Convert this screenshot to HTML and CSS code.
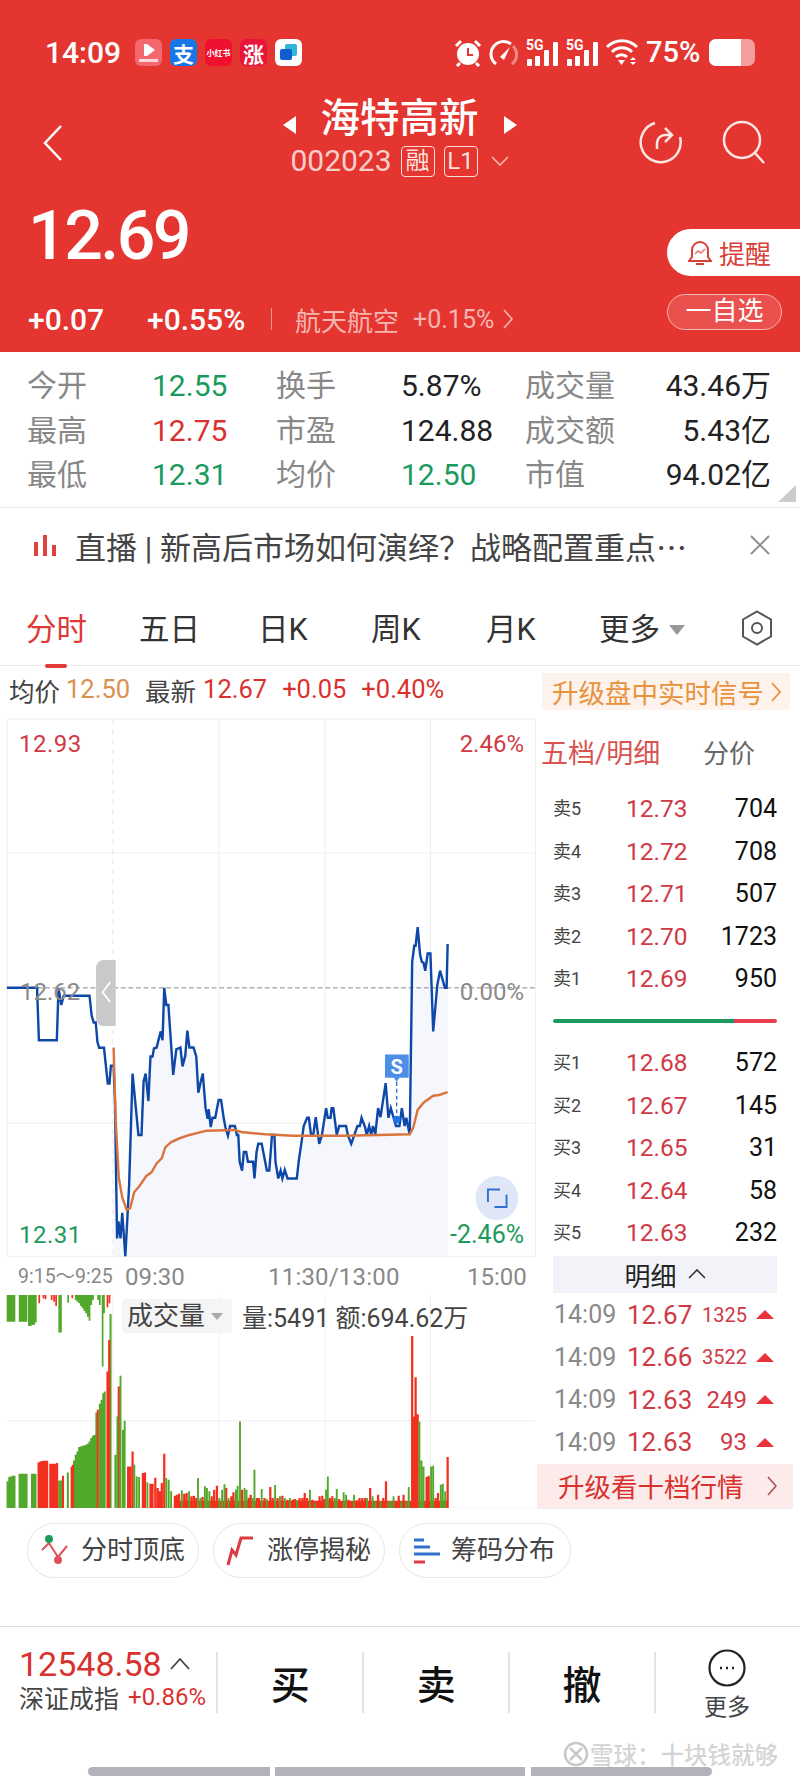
FILE: index.html
```html
<!DOCTYPE html>
<html lang="zh">
<head>
<meta charset="utf-8">
<title>海特高新</title>
<link rel="stylesheet" href="styles.css">
</head>
<body>
<div class="page">
<header class="header">
  <div class="status">
    <span class="clock">14:09</span>
    <div class="apps">
      <span class="app app-video"><svg viewBox="0 0 27 27" width="27" height="27"><path d="M9 5h3l8 6-8 6H9z" fill="#fff"/><rect x="4" y="20" width="19" height="3" fill="#ffd9d9"/></svg></span>
      <span class="app app-ali">支</span>
      <span class="app app-red">小红书</span>
      <span class="app app-zhang">涨</span>
      <span class="app app-chat"><svg viewBox="0 0 27 27" width="27" height="27"><rect x="10" y="5" width="12" height="12" rx="2" fill="#2fb6d8"/><rect x="5" y="10" width="12" height="11" rx="2" fill="#0d5fd0"/></svg></span>
    </div>
    <div class="sys">
      <svg class="i-alarm" viewBox="0 0 28 28" width="28" height="28"><circle cx="14" cy="15" r="11" fill="#fff"/><path d="M14 9v7h5" fill="none" stroke="#e53530" stroke-width="2"/><path d="M2 7l5-5M26 7l-5-5M6 24l-3 3M22 24l3 3" stroke="#fff" stroke-width="3" fill="none"/></svg>
      <svg class="i-gauge" viewBox="0 0 30 28" width="30" height="28"><path d="M8 25A12 12 0 0 1 23 5" fill="none" stroke="#fff" stroke-width="3"/><path d="M25 7A12 12 0 0 1 24 25" fill="none" stroke="#f08a84" stroke-width="3"/><path d="M12 18L22 8l-6 13z" fill="#fff"/></svg>
      <span class="signal"><b>5G</b><i class="b1"></i><i class="b2"></i><i class="b3"></i><i class="b4"></i></span>
      <span class="signal"><b>5G</b><i class="b1"></i><i class="b2"></i><i class="b3"></i><i class="b4"></i></span>
      <svg class="i-wifi" viewBox="0 0 32 27" width="32" height="27"><path d="M1 8a21 21 0 0 1 30 0M6 13a14 14 0 0 1 20 0M10 18a8 8 0 0 1 11 0" fill="none" stroke="#fff" stroke-width="3"/><path d="M12 21h7l-3.500 5zM24 21l3-3 3 3zM24 23h6l-3 3z" fill="#fff"/></svg>
      <span class="batt-text">75%</span>
      <span class="battery"><i></i></span>
    </div>
  </div>
  <div class="nav">
    <svg class="back" viewBox="0 0 20 36" width="20" height="36"><path d="M18 1L2 18l16 17" fill="none" stroke="#fff" stroke-width="2.500"/></svg>
    <div class="stock">
      <div class="stock-name"><i class="tri-l"></i><span>海特高新</span><i class="tri-r"></i></div>
      <div class="stock-code"><span>002023</span><em class="tag">融</em><em class="tag">L1</em>
        <svg viewBox="0 0 18 10" width="18" height="10"><path d="M1 1l8 8 8-8" fill="none" stroke="#f4b9b5" stroke-width="1.600"/></svg></div>
    </div>
    <div class="nav-actions">
      <svg viewBox="0 0 44 44" width="44" height="44"><path d="M16 3A20 20 0 1 0 41 17" fill="none" stroke="#fde6e4" stroke-width="2.500"/><path d="M18 29v-6a8 8 0 0 1 8-8h6M26 8l7 7-7 7" fill="none" stroke="#fde6e4" stroke-width="2.500"/></svg>
      <svg viewBox="0 0 44 44" width="44" height="44"><circle cx="20" cy="20" r="18" fill="none" stroke="#fde6e4" stroke-width="2.500"/><path d="M33 33l9 10" stroke="#fde6e4" stroke-width="2.500"/></svg>
    </div>
  </div>
  <div class="quote">
    <div class="quote-left">
      <div class="price">12.69</div>
      <div class="change"><span class="c1">+0.07</span><span class="c2">+0.55%</span><i class="vsep"></i><span class="c3">航天航空</span><span class="c4">+0.15%</span>
        <svg viewBox="0 0 10 20" width="10" height="20"><path d="M1 1l8 9-8 9" fill="none" stroke="#f5b5b0" stroke-width="1.600"/></svg></div>
    </div>
    <div class="quote-right">
      <div class="alert"><svg viewBox="0 0 24 26" width="24" height="26"><path d="M12 2a8 8 0 0 0-8 8v7l-3 4h22l-3-4v-7a8 8 0 0 0-8-8zM8 24h8" fill="none" stroke="#d9403a" stroke-width="2"/><path d="M7 14l3-3 3 2 4-4" fill="none" stroke="#e57a75" stroke-width="1.600"/></svg><span>提醒</span></div>
      <div class="watch">一自选</div>
    </div>
  </div>
</header>

<section class="stats">
  <div class="stat-row"><span class="k">今开</span><span class="v green">12.55</span><span class="k">换手</span><span class="v">5.87%</span><span class="k">成交量</span><span class="v end">43.46万</span></div>
  <div class="stat-row"><span class="k">最高</span><span class="v red">12.75</span><span class="k">市盈</span><span class="v">124.88</span><span class="k">成交额</span><span class="v end">5.43亿</span></div>
  <div class="stat-row"><span class="k">最低</span><span class="v green">12.31</span><span class="k">均价</span><span class="v green">12.50</span><span class="k">市值</span><span class="v end">94.02亿</span></div>
  <i class="fold"></i>
</section>

<section class="banner">
  <svg viewBox="0 0 24 24" width="24" height="24"><path d="M3 9v14M12 2v21M21 12v11" stroke="#e2403f" stroke-width="4" fill="none"/></svg>
  <span class="banner-text">直播 | 新高后市场如何演绎？战略配置重点⋯</span>
  <svg class="close" viewBox="0 0 20 20" width="20" height="20"><path d="M1 1l18 18M19 1L1 19" stroke="#8a8a8a" stroke-width="1.800"/></svg>
</section>

<nav class="tabs">
  <span class="tab tab-on">分时</span><span class="tab t2">五日</span><span class="tab t3">日K</span><span class="tab t4">周K</span><span class="tab t5">月K</span><span class="tab t6">更多<i class="tab-tri"></i></span>
  <svg class="hex" viewBox="0 0 32 36" width="32" height="36"><path d="M16 1.500L30 9.500v17L16 34.500 2 26.500v-17z" fill="none" stroke="#555" stroke-width="2"/><circle cx="16" cy="18" r="5" fill="none" stroke="#555" stroke-width="2"/></svg>
</nav>

<section class="infobar">
  <span class="ib-k">均价</span><span class="ib-o">12.50</span><span class="ib-k ib-gap">最新</span><span class="ib-r">12.67</span><span class="ib-r ib-gap2">+0.05</span><span class="ib-r ib-gap2">+0.40%</span>
  <div class="signal-btn"><span>升级盘中实时信号</span><svg viewBox="0 0 10 20" width="10" height="20"><path d="M1 1l8 9-8 9" fill="none" stroke="#e8923b" stroke-width="1.800"/></svg></div>
</section>

<main class="main">
  <div class="left">
    <div class="plot">
      <svg class="plot-svg" viewBox="0 22 1559.5 1510" preserveAspectRatio="none">
        <g class="grid">
          <path d="M21 25H1555V1530H21zM21 400H1555M21 1157H1555M636 25V1530M944 25V1530M1250 25V1530"/>
        </g>
        <path class="grid-dash" d="M328 25V1530"/>
        <polygon class="area" points="330,1530 334,1100 340,1480 344,1432 350,1480 355,1408 364,1530 375,1330 385,1018 395,1120 402,1190 411,1190 417,1040 423,1018 431,1095 437,970 443,970 447,948 455,945 460,925 467,900 472,925 477,778 483,826 489,826 503,1022 512,950 524,945 530,998 538,968 544,898 550,945 562,945 570,970 576,1072 582,1045 589,1018 597,1115 603,1145 606,1118 612,1168 617,1142 625,1142 635,1092 642,1092 650,1145 655,1170 662,1192 668,1165 682,1165 688,1190 692,1190 696,1265 703,1290 708,1238 715,1238 720,1265 735,1265 739,1312 745,1238 750,1215 760,1215 775,1290 782,1290 790,1190 797,1190 800,1265 808,1312 815,1290 820,1312 827,1288 835,1312 862,1312 868,1260 875,1215 882,1165 892,1142 897,1142 903,1188 910,1188 917,1140 927,1215 935,1190 947,1115 952,1142 960,1142 963,1115 968,1115 978,1190 985,1165 1005,1165 1010,1190 1020,1215 1038,1165 1045,1165 1050,1142 1060,1168 1065,1190 1072,1165 1078,1190 1083,1165 1090,1188 1098,1115 1105,1140 1120,1045 1128,1142 1135,1115 1150,1165 1160,1165 1167,1115 1175,1165 1180,1142 1190,1190 1197,705 1203,660 1207,660 1213,608 1220,685 1225,705 1230,708 1235,730 1242,682 1250,682 1258,900 1270,770 1278,730 1292,778 1297,778 1300,655 1300,1530"/>
        <path class="mid-dash" d="M21 778H1555"/>
        <polyline class="price-line" points="20,778 108,778 108,790 113,925 165,925 170,778 178,826 185,800 260,800 266,855 272,875 278,875 283,930 288,946 302,946 313,1046 318,1046 322,996 330,996 334,1100 340,1480 344,1432 350,1480 355,1408 364,1530 375,1330 385,1018 395,1120 402,1190 411,1190 417,1040 423,1018 431,1095 437,970 443,970 447,948 455,945 460,925 467,900 472,925 477,778 483,826 489,826 503,1022 512,950 524,945 530,998 538,968 544,898 550,945 562,945 570,970 576,1072 582,1045 589,1018 597,1115 603,1145 606,1118 612,1168 617,1142 625,1142 635,1092 642,1092 650,1145 655,1170 662,1192 668,1165 682,1165 688,1190 692,1190 696,1265 703,1290 708,1238 715,1238 720,1265 735,1265 739,1312 745,1238 750,1215 760,1215 775,1290 782,1290 790,1190 797,1190 800,1265 808,1312 815,1290 820,1312 827,1288 835,1312 862,1312 868,1260 875,1215 882,1165 892,1142 897,1142 903,1188 910,1188 917,1140 927,1215 935,1190 947,1115 952,1142 960,1142 963,1115 968,1115 978,1190 985,1165 1005,1165 1010,1190 1020,1215 1038,1165 1045,1165 1050,1142 1060,1168 1065,1190 1072,1165 1078,1190 1083,1165 1090,1188 1098,1115 1105,1140 1120,1045 1128,1142 1135,1115 1150,1165 1160,1165 1167,1115 1175,1165 1180,1142 1190,1190 1197,705 1203,660 1207,660 1213,608 1220,685 1225,705 1230,708 1235,730 1242,682 1250,682 1258,900 1270,770 1278,730 1292,778 1297,778 1300,655"/>
        <polyline class="avg-line" points="330,945 336,1150 345,1310 355,1365 368,1400 378,1395 390,1350 405,1333 425,1305 440,1295 455,1270 470,1255 480,1225 497,1210 520,1200 550,1190 600,1178 680,1176 700,1182 770,1188 850,1192 1000,1192 1100,1190 1190,1188 1200,1170 1213,1120 1230,1100 1258,1080 1275,1078 1300,1070"/>
        <path class="handle" d="M336 700H300a21 21 0 0 0-21 21V864a21 21 0 0 0 21 21H336z"/>
        <path class="handle-chev" d="M320 762L298 790 320 818"/>
        <path class="s-stem" d="M1152 1042V1150"/>
        <circle class="s-dot" cx="1152" cy="1147" r="11"/>
        <path class="s-flag" d="M1118 965H1187V1030H1160L1152 1042 1144 1030H1118z"/>
        <text class="s-text" x="1152" y="1018">S</text>
        <circle class="expand" cx="1443" cy="1367" r="62"/>
        <path class="expand-ic" d="M1417 1378V1343H1452M1471 1357V1392H1436"/>
      </svg>
      <span class="lbl l-tl">12.93</span>
      <span class="lbl l-tr">2.46%</span>
      <span class="lbl l-ml">12.62</span>
      <span class="lbl l-mr">0.00%</span>
      <span class="lbl l-bl">12.31</span>
      <span class="lbl l-br">-2.46%</span>
    </div>
    <div class="axis"><span class="ax0">9:15～9:25</span><span class="ax1">09:30</span><span class="ax2">11:30/13:00</span><span class="ax3">15:00</span></div>
    <div class="vol">
      <svg class="plot-svg" viewBox="0 135 1559.5 640" preserveAspectRatio="none">
        <path class="grid" d="M21 775H1555M21 513H1555M328 135V775M636 135V775M944 135V775M1250 135V775"/>
        <path class="vr" stroke-width="22" d="M505 764H1300"/>
        <path class="vg" stroke-width="5" d="M22 135V215M27 135V215M32 135V215M37 135V215M42 135V215M57 135V215M62 135V215M67 135V215M72 135V215M77 135V215M84 135V228M89 135V228M94 135V225M99 135V225M104 135V218M172 135V248M177 135V248M198 135V158M220 135V150M225 135V155M230 135V160M235 135V168M240 135V175M245 135V182M250 135V190M255 135V200M260 135V212M265 135V165M270 135V150M285 135V150M290 135V165M298 135V350M302 135V190"/>
        <path class="vr" stroke-width="5" d="M114 135V160M126 135V145M132 135V148M150 135V150M157 135V155M163 135V168M210 135V145M312 135V172M318 135V160"/>
        <path class="vg" stroke-width="6" d="M22 775V695M27 775V682M32 775V680M37 775V678M42 775V678M57 775V672M62 775V672M67 775V672M72 775V672M77 775V672M93 775V672M98 775V672M103 775V672M172 775V692M177 775V692M197 775V668M215 775V632M220 775V615M225 775V605M230 775V592M235 775V590M240 775V588M245 775V587M250 775V585M255 775V582M260 775V575M265 775V565M270 775V558M275 775V555M280 775V488M290 775V462M295 775V450M300 775V430M304 775V425M321 775V192"/>
        <path class="vr" stroke-width="6" d="M112 775V638M117 775V635M122 775V634M127 775V633M132 775V633M137 775V633M146 775V642M151 775V642M156 775V642M161 775V642M166 775V640M183 775V678M208 775V650M212 775V645M284 775V480M312 775V365M317 775V270"/>
        <path class="vr" stroke-width="6.500" d="M345 775V410M372 775V650M378 775V650M385 775V605M415 775V670M421 775V668M437 775V702M443 775V702M451 775V684M458 775V715M464 775V725M470 775V700M477 775V612M508 775V738M514 775V735M520 775V732M535 775V732M542 775V730M556 775V740M563 775V738M570 775V745M588 775V742M615 775V740M622 775V720M630 775V708M657 775V715M672 775V740M678 775V728M703 775V720M722 775V745M728 775V735M746 775V745M752 775V745M768 775V745M785 775V712M792 775V745M806 775V745M820 775V738M835 775V750M850 775V750M856 775V748M870 775V745M878 775V745M885 775V730M892 775V745M907 775V750M928 775V740M936 775V738M943 775V748M958 775V745M965 775V740M985 775V748M1012 775V750M1018 775V755M1036 775V752M1044 775V745M1052 775V745M1060 775V745M1075 775V715M1098 775V735M1113 775V745M1121 775V695M1150 775V755M1158 775V738M1172 775V735M1197 775V258M1202 775V500M1207 775V382M1213 775V493M1239 775V682M1245 775V678M1265 775V745M1272 775V730M1300 775V622"/>
        <path class="vg" stroke-width="5.500" d="M335 775V615M341 775V500M350 775V378M357 775V540M362 775V513M390 775V645M397 775V680M404 775V682M428 775V698M483 775V685M490 775V690M497 775V725M528 775V722M549 775V725M575 775V685M582 775V745M595 775V710M601 775V715M608 775V725M637 775V745M645 775V720M652 775V704M664 775V745M685 775V720M690 775V708M697 775V515M710 775V715M716 775V720M733 775V745M739 775V660M760 775V718M775 775V748M799 775V706M813 775V740M827 775V745M842 775V745M863 775V750M900 775V720M914 775V760M947 775V720M952 775V680M972 775V745M978 775V718M998 775V728M1005 775V735M1028 775V735M1066 775V745M1082 775V740M1090 775V755M1105 775V755M1128 775V755M1135 775V755M1143 775V740M1165 775V755M1180 775V755M1187 775V712M1218 775V515M1224 775V632M1230 775V650M1252 775V650M1258 775V648M1280 775V705M1286 775V702M1293 775V725"/>
      </svg>
      <div class="vol-head">
        <span class="vol-chip">成交量<i></i></span>
        <span class="vol-info">量:5491 额:694.62万</span>
      </div>
    </div>
  </div>

  <aside class="right">
    <div class="book-head"><span class="bh1">五档/明细</span><span class="bh2">分价</span></div>
    <div class="book-row"><span class="bk">卖5</span><span class="bp">12.73</span><span class="bq">704</span></div>
    <div class="book-row"><span class="bk">卖4</span><span class="bp">12.72</span><span class="bq">708</span></div>
    <div class="book-row"><span class="bk">卖3</span><span class="bp">12.71</span><span class="bq">507</span></div>
    <div class="book-row"><span class="bk">卖2</span><span class="bp">12.70</span><span class="bq">1723</span></div>
    <div class="book-row"><span class="bk">卖1</span><span class="bp">12.69</span><span class="bq">950</span></div>
    <div class="book-bar"><i></i></div>
    <div class="book-row"><span class="bk">买1</span><span class="bp">12.68</span><span class="bq">572</span></div>
    <div class="book-row"><span class="bk">买2</span><span class="bp">12.67</span><span class="bq">145</span></div>
    <div class="book-row"><span class="bk">买3</span><span class="bp">12.65</span><span class="bq">31</span></div>
    <div class="book-row"><span class="bk">买4</span><span class="bp">12.64</span><span class="bq">58</span></div>
    <div class="book-row"><span class="bk">买5</span><span class="bp">12.63</span><span class="bq">232</span></div>
    <div class="detail-band"><span>明细</span><svg viewBox="0 0 18 10" width="18" height="10"><path d="M1 9l8-8 8 8" fill="none" stroke="#333" stroke-width="1.600"/></svg></div>
    <div class="trade"><span class="tt">14:09</span><span class="tp">12.67</span><span class="tq small">1325</span><i class="up"></i></div>
    <div class="trade"><span class="tt">14:09</span><span class="tp">12.66</span><span class="tq small">3522</span><i class="up"></i></div>
    <div class="trade"><span class="tt">14:09</span><span class="tp">12.63</span><span class="tq">249</span><i class="up"></i></div>
    <div class="trade"><span class="tt">14:09</span><span class="tp">12.63</span><span class="tq">93</span><i class="up"></i></div>
    <div class="upgrade"><span>升级看十档行情</span><svg viewBox="0 0 10 20" width="10" height="20"><path d="M1 1l8 9-8 9" fill="none" stroke="#a0524f" stroke-width="1.600"/></svg></div>
  </aside>
</main>

<section class="chips">
  <div class="chip"><svg viewBox="0 0 30 34" width="30" height="34"><path d="M2 16l7-7 9 14 9-11" fill="none" stroke="#e0505a" stroke-width="2"/><circle cx="9" cy="5" r="4" fill="#1d9a5b"/><circle cx="18" cy="26" r="4" fill="#e0505a"/></svg><span>分时顶底</span></div>
  <div class="chip"><svg viewBox="0 0 30 34" width="30" height="34"><path d="M2 31l4-15 4 5 5-17h12" fill="none" stroke="#dc3b44" stroke-width="3"/></svg><span>涨停揭秘</span></div>
  <div class="chip"><svg viewBox="0 0 28 30" width="28" height="30"><path d="M2 4h10M2 11h16" stroke="#2e73c9" stroke-width="3"/><path d="M2 18h26" stroke="#2e73c9" stroke-width="3"/><path d="M2 26h11" stroke="#dc3b44" stroke-width="3"/></svg><span>筹码分布</span></div>
</section>

<footer class="foot">
  <div class="index">
    <div class="index-top"><span>12548.58</span><svg viewBox="0 0 20 12" width="20" height="12"><path d="M1 11l9-10 9 10" fill="none" stroke="#444" stroke-width="1.800"/></svg></div>
    <div class="index-bot"><span>深证成指</span><b>+0.86%</b></div>
  </div>
  <div class="act">买</div>
  <div class="act">卖</div>
  <div class="act">撤</div>
  <div class="act more"><svg viewBox="0 0 38 38" width="38" height="38"><circle cx="19" cy="19" r="17.500" fill="none" stroke="#222" stroke-width="2.200"/><path d="M12 19h2M18 19h2M24 19h2" stroke="#222" stroke-width="2.400"/></svg><span>更多</span></div>
</footer>

<div class="wm"><svg viewBox="0 0 26 28" width="26" height="28"><circle cx="13" cy="14" r="11" fill="none" stroke="#c8c8c8" stroke-width="2.500"/><path d="M7 8l12 12M19 8L7 20" stroke="#c8c8c8" stroke-width="2.500"/></svg><span>雪球：十块钱就够</span></div>
<div class="homebar"><i class="h1"></i><i class="h2"></i><i class="h3"></i></div>
</div>
</body>
</html>
```

FILE: styles.css
```css
* { box-sizing: border-box; }
html, body { margin: 0; padding: 0; }
body { background: #fff; font-family: Roboto, "Noto Sans CJK SC", sans-serif; color: #222; }
i, em, b { font-style: normal; font-weight: normal; display: block; }
svg { display: block; flex: none; }
.page { width: 800px; height: 1778px; overflow: hidden; }

/* header */
.header { height: 352px; background: #e53530; color: #fff; padding-top: 39px; }
.status { display: flex; align-items: center; height: 27px; padding: 0 45px; }
.clock { font-size: 30px; font-weight: 500; width: 90px; line-height: 27px; }
.apps { display: flex; gap: 8px; }
.app { width: 27px; height: 27px; border-radius: 6px; display: flex; align-items: center; justify-content: center; color: #fff; overflow: hidden; }
.app-video { background: #f2686e; }
.app-ali { background: #1678e6; font-size: 21px; font-weight: 700; }
.app-red { background: #f01030; font-size: 8px; font-weight: 700; white-space: nowrap; }
.app-zhang { background: #e8143a; font-size: 21px; font-weight: 700; }
.app-chat { background: #fff; }
.sys { margin-left: auto; display: flex; align-items: center; }
.i-alarm { margin-right: 6px; }
.i-gauge { margin-right: 8px; }
.signal { width: 32px; height: 26px; position: relative; margin-right: 8px; display: block; }
.signal b { position: absolute; left: 0; top: -2px; font-size: 14px; font-weight: 700; line-height: 14px; }
.signal i { position: absolute; bottom: 0; width: 5px; background: #fff; border-radius: 1px; }
.signal .b1 { left: 1px; height: 7px; }
.signal .b2 { left: 9px; height: 10px; }
.signal .b3 { left: 18px; height: 16px; }
.signal .b4 { left: 27px; height: 24px; }
.i-wifi { margin-right: 8px; }
.batt-text { font-size: 29px; font-weight: 500; line-height: 27px; width: 63px; }
.battery { width: 46px; height: 27px; background: #f59ea0; border-radius: 7px; display: block; overflow: hidden; }
.battery i { width: 32px; height: 27px; background: #fff; }

.nav { display: grid; grid-template-columns: 1fr auto 1fr; margin-top: 30px; height: 84px; padding: 0 39px 0 38px; }
.back { margin: 29px 0 0 5px; }
.stock { display: flex; flex-direction: column; align-items: center; }
.stock-name { display: flex; align-items: center; height: 44px; font-size: 39.500px; font-weight: 500; line-height: 44px; gap: 25px; margin-top: 1px; }
.tri-l, .tri-r { width: 0; height: 0; border-top: 9px solid transparent; border-bottom: 9px solid transparent; margin-top: 12px; }
.tri-l { border-right: 13px solid #fff; }
.tri-r { border-left: 13px solid #fff; }
.stock-code { display: flex; align-items: center; height: 34px; margin-top: 3px; color: #f9cfcb; font-size: 30px; line-height: 34px; }
.stock-code svg { margin-left: 13px; }
.tag { height: 31px; border: 1px solid #fbdcd9; border-radius: 4px; font-size: 24px; line-height: 29px; width: 34px; text-align: center; margin-left: 9px; color: #fbe2df; }
.nav-actions { display: flex; justify-content: flex-end; gap: 39px; padding-top: 24px; margin-right: -5px; }

.quote { display: flex; justify-content: space-between; }
.quote-left { padding: 16px 0 0 28px; }
.price { font-size: 68px; font-weight: 500; line-height: 80px; letter-spacing: -2.500px; }
.change { display: flex; align-items: center; height: 40px; margin-top: 23px; }
.c1 { font-size: 30px; font-weight: 500; width: 119px; }
.c2 { font-size: 30px; font-weight: 500; width: 124px; }
.vsep { width: 1px; height: 22px; background: #f09490; margin-right: 23px; }
.c3 { font-size: 26px; color: #f5b5b0; width: 118px; }
.c4 { font-size: 25px; color: #f5b5b0; width: 90px; }
.quote-right { display: flex; flex-direction: column; align-items: flex-end; padding-top: 49px; }
.alert { width: 133px; height: 47px; background: #fff; border-radius: 24px 0 0 24px; display: flex; align-items: center; color: #d9403a; font-size: 26px; padding-left: 21px; gap: 7px; }
.watch { width: 115px; height: 36px; margin: 18px 18px 0 0; border: 1px solid #f5b5b0; border-radius: 18px; background: #e9504e; font-size: 26px; line-height: 33px; text-align: center; }

/* stats */
.stats { height: 156px; border-bottom: 1px solid #e8e8e8; padding-top: 12px; position: relative; }
.stat-row { display: grid; grid-template-columns: 125px 124px 125px 124px 124px 122px; height: 44.500px; line-height: 44px; padding-left: 27px; font-size: 30px; color: #222; }
.k { color: #888; }
.v.end { text-align: right; }
.green { color: #1a9a5c; }
.red { color: #d9322e; }
.fold { position: absolute; right: 4px; bottom: 5px; width: 0; height: 0; border-left: 18px solid transparent; border-bottom: 17px solid #ccc; }

/* banner */
.banner { height: 74px; display: flex; align-items: center; padding-left: 33px; }
.banner-text { font-size: 31px; color: #444; margin-left: 18px; white-space: nowrap; width: 675px; }

/* tabs */
.tabs { height: 84px; border-bottom: 1px solid #e8e8e8; position: relative; }
.tab { font-size: 30.500px; color: #333; display: flex; align-items: center; position: absolute; top: 26px; line-height: 44px; }
.tab-on { left: 26px; color: #dd3a36; }
.tab-on::after { content: ""; position: absolute; left: 19px; bottom: -16px; width: 22px; height: 4px; border-radius: 2px; background: #e03a3a; }
.t2 { left: 139px; }
.t3 { left: 258px; }
.t4 { left: 371px; }
.t5 { left: 486px; }
.t6 { left: 599px; }
.tab-tri { width: 0; height: 0; margin-left: 9px; border-left: 8px solid transparent; border-right: 8px solid transparent; border-top: 10px solid #999; }
.hex { position: absolute; left: 741px; top: 28px; }

/* info bar */
.infobar { height: 52px; display: flex; align-items: center; padding: 0 0 6px 9px; font-size: 25.500px; position: relative; }
.ib-k { color: #444; }
.ib-o { color: #d99050; margin-left: 6px; }
.ib-r { color: #d9322e; margin-left: 7px; }
.ib-gap { margin-left: 15px; }
.ib-gap2 { margin-left: 15px; }
.signal-btn { position: absolute; left: 542px; top: 7px; width: 248px; height: 37px; background: #fdf3ec; color: #e8923b; font-size: 26.500px; display: flex; align-items: center; padding-left: 10px; gap: 7px; white-space: nowrap; }

/* main */
.main { display: flex; height: 790px; }
.left { width: 537px; flex: none; }
.plot { height: 539px; position: relative; }
.plot-svg { position: absolute; inset: 0; width: 100%; height: 100%; }
.grid { fill: none; stroke: #ececec; stroke-width: 2.500; }
.grid-dash { fill: none; stroke: #e4e4e4; stroke-width: 2.500; stroke-dasharray: 16 12; }
.mid-dash { fill: none; stroke: #777; stroke-width: 2.500; stroke-dasharray: 14 8; }
.area { fill: #f6f7fc; }
.price-line { fill: none; stroke: #0d47a8; stroke-width: 7; stroke-linejoin: miter; }
.avg-line { fill: none; stroke: #d9743e; stroke-width: 7; }
.handle { fill: #c9c9c9; }
.handle-chev { fill: none; stroke: #fff; stroke-width: 5; }
.s-stem { stroke: #3d6fbe; stroke-width: 4; stroke-dasharray: 11 8; fill: none; }
.s-dot { fill: #1f73e0; }
.s-flag { fill: #4d8fe8; }
.s-text { fill: #fff; font-size: 58px; font-weight: 700; text-anchor: middle; font-family: Roboto, sans-serif; }
.expand { fill: #dfe6f7; }
.expand-ic { fill: none; stroke: #2f6fd0; stroke-width: 5.500; }
.lbl { position: absolute; font-size: 24px; line-height: 28px; }
.l-tl { left: 19px; top: 12px; color: #cf3a45; letter-spacing: .5px; }
.l-tr { right: 13px; top: 12px; color: #cf3a45; }
.l-ml { left: 20px; top: 260px; color: #8a8a8a; }
.l-mr { right: 13px; top: 260px; color: #8a8a8a; }
.l-bl { left: 19px; top: 503px; color: #1d9a5b; letter-spacing: .5px; }
.l-br { right: 13px; top: 503px; color: #1d9a5b; font-size: 25px; }

.axis { height: 38px; position: relative; color: #888; font-size: 24px; line-height: 38px; }
.axis span { position: absolute; top: 1px; white-space: nowrap; }
.ax0 { left: 18px; font-size: 19.500px; }
.ax1 { left: 125px; }
.ax2 { left: 268px; letter-spacing: .2px; }
.ax3 { left: 467px; }

.vol { height: 213px; position: relative; }
.vg { fill: none; stroke: #52a82a; }
.vr { fill: none; stroke: #f3301f; }
.vol-head { position: absolute; left: 122px; top: 4px; display: flex; align-items: center; height: 34px; }
.vol-chip { width: 110px; height: 34px; background: #f5f5f5; border-radius: 4px; font-size: 26px; line-height: 34px; color: #444; display: flex; align-items: center; padding-left: 5px; }
.vol-chip i { width: 0; height: 0; margin-left: 6px; border-left: 6px solid transparent; border-right: 6px solid transparent; border-top: 7px solid #aaa; }
.vol-info { margin-left: 10px; font-size: 25px; color: #444; white-space: nowrap; }

/* order book */
.right { flex: 1; min-width: 0; }
.book-head { height: 66px; margin-bottom: 4px; display: flex; align-items: center; padding-left: 4px; font-size: 27px; }
.bh1 { color: #d9534f; width: 162px; }
.bh2 { color: #666; font-size: 26px; }
.book-row { height: 42.500px; display: grid; grid-template-columns: 74px 62px 88px; align-items: center; margin-left: 16px; font-size: 25px; line-height: 42px; }
.bk { font-size: 18px; color: #444; }
.bp { color: #cf3a45; font-size: 24.500px; margin-left: -1px; }
.bq { text-align: right; color: #111; }
.book-bar { height: 41.500px; margin-left: 16px; width: 224px; display: flex; align-items: center; }
.book-bar i { width: 100%; height: 4px; border-radius: 2px; background: linear-gradient(90deg, #1a9a5c 0 81%, #e84050 81% 100%); }
.detail-band { height: 37px; margin: 1px 0 1px 16px; width: 224px; background: #f2f3f9; display: flex; align-items: center; justify-content: center; gap: 11px; font-size: 26px; color: #222; }
.trade { height: 42.500px; display: grid; grid-template-columns: 73px 62px 58px 27px; align-items: center; margin-left: 17px; font-size: 25px; }
.tt { color: #8a8a8a; }
.tp { color: #cf3a45; white-space: nowrap; font-size: 26px; }
.tq { color: #cf3a45; text-align: right; font-size: 24px; }
.tq.small { font-size: 20px; }
.up { width: 0; height: 0; margin-left: 9px; border-left: 9px solid transparent; border-right: 9px solid transparent; border-bottom: 9px solid #e8323a; }
.upgrade { height: 45px; width: 256px; background: #fdeaea; display: flex; align-items: center; padding-left: 21px; color: #d9322e; font-size: 26.500px; gap: 23px; border-bottom: 1px solid #eee; }

/* chips */
.chips { display: flex; gap: 14px; padding: 15px 0 0 27px; height: 119px; border-bottom: 1px solid #ddd; }
.chip { width: 172px; height: 55px; border: 1px solid #e6e6e6; border-radius: 28px; display: flex; align-items: center; font-size: 26px; color: #444; padding-left: 12px; gap: 11px; }
.chip span { white-space: nowrap; margin-top: -7px; }

/* footer */
.foot { display: flex; height: 86px; padding-top: 25px; }
.index { width: 217px; height: 61px; padding-left: 19px; }
.index-top { display: flex; align-items: center; height: 34px; color: #d9322e; font-size: 34px; gap: 8px; margin-top: -5px; }
.index-bot { display: flex; align-items: center; height: 34px; font-size: 25px; color: #444; gap: 9px; white-space: nowrap; margin-top: -1px; }
.index-bot b { color: #d9322e; font-size: 24px; }
.act { width: 146.500px; height: 61px; border-left: 2px solid #e4e4e4; display: flex; align-items: center; justify-content: center; font-size: 39px; font-weight: 500; color: #111; padding-bottom: 2px; }
.act.more { flex-direction: column; justify-content: flex-start; font-size: 23px; font-weight: 400; margin-top: -3px; height: 70px; border-left: 0; position: relative; color: #444; gap: 1px; padding-bottom: 0; }
.act.more::before { content: ""; position: absolute; left: 0; top: 3px; width: 2px; height: 61px; background: #e4e4e4; }
.wm { height: 27px; margin-top: 27px; display: flex; align-items: center; padding-left: 563px; color: #d4d4d4; font-size: 23.500px; font-weight: 500; white-space: nowrap; gap: 1px; }
.homebar { display: flex; padding-left: 88px; gap: 5px; }
.homebar i { height: 9px; background: #b2b2ba; }
.h1 { width: 182px; border-radius: 5px 0 0 5px; }
.h2 { width: 250px; margin-right: 1px; }
.h3 { width: 181px; border-radius: 0 5px 5px 0; }
```
